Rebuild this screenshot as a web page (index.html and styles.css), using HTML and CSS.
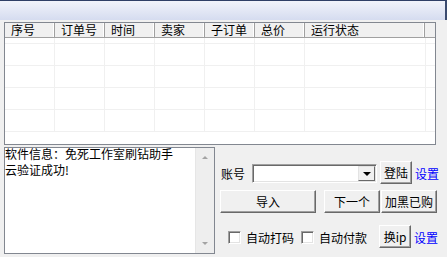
FILE: index.html
```html
<!DOCTYPE html>
<html lang="zh-CN">
<head>
    <meta charset="UTF-8">
    <title>刷钻助手</title>
    <link rel="stylesheet" href="styles.css">
</head>
<body>

    <div class="window">
        <div class="titlebar"></div>

        <div class="main">
            <div class="listview">
                <div class="list-head">
                    <div class="col">序号</div>
                    <div class="col">订单号</div>
                    <div class="col">时间</div>
                    <div class="col">卖家</div>
                    <div class="col">子订单</div>
                    <div class="col">总价</div>
                    <div class="col wide">运行状态</div>
                    <div class="col rest"></div>
                </div>
                <div class="list-body">
                    <div class="row"><span></span><span></span><span></span><span></span><span></span><span></span><span class="wide"></span></div>
                    <div class="row"><span></span><span></span><span></span><span></span><span></span><span></span><span class="wide"></span></div>
                    <div class="row"><span></span><span></span><span></span><span></span><span></span><span></span><span class="wide"></span></div>
                    <div class="row"><span></span><span></span><span></span><span></span><span></span><span></span><span class="wide"></span></div>
                    <div class="row"><span></span><span></span><span></span><span></span><span></span><span></span><span class="wide"></span></div>
                </div>
            </div>

            <div class="bottom">
                <div class="logbox">
                    <div class="log-text">
                        <div>软件信息：免死工作室刷钻助手</div>
                        <div>云验证成功!</div>
                    </div>
                    <div class="scrollbar">
                        <span class="arrow up"></span>
                        <span class="arrow down"></span>
                    </div>
                </div>

                <div class="panel">
                    <div class="line first">
                        <span class="label">账号</span>
                        <div class="combo">
                            <div class="combo-btn"><span class="tri"></span></div>
                        </div>
                        <button class="btn small">登陆</button>
                        <a class="link" href="#">设置</a>
                    </div>
                    <div class="line second">
                        <button class="btn import">导入</button>
                        <button class="btn mid">下一个</button>
                        <button class="btn mid tight">加黑已购</button>
                    </div>
                    <div class="line third">
                        <label class="check"><span class="box"></span>自动打码</label>
                        <label class="check"><span class="box"></span>自动付款</label>
                        <button class="btn small ip">换ip</button>
                        <a class="link" href="#">设置</a>
                    </div>
                </div>
            </div>
        </div>
    </div>

</body>
</html>
```

FILE: styles.css
```css
* {
    margin: 0;
    padding: 0;
    box-sizing: border-box;
}

body {
    font-family: "Noto Sans CJK SC", "DejaVu Sans", sans-serif;
    font-size: 12px;
    color: #000;
    background-color: #f0f0f0;
    width: 447px;
    height: 257px;
    overflow: hidden;
}

.window {
    height: 257px;
}

.titlebar {
    height: 20px;
    border-top: 1px solid #2f3f66;
    border-right: 2px solid #3b4b70;
    background: linear-gradient(#f1f3fa, #d5dcf0);
}

.main {
    padding: 2px 0 0 4px;
}

/* list view */
.listview {
    width: 432px;
    height: 123px;
    border: 1px solid #828790;
    background-color: #fff;
    overflow: hidden;
}

.list-head {
    display: flex;
    height: 15px;
    background-color: #f0f0f0;
    border-bottom: 1px solid #a0a0a0;
}

.col {
    width: 50px;
    padding-left: 6px;
    line-height: 14px;
    border-right: 1px solid #a0a0a0;
    box-shadow: inset -1px 0 #fff;
    white-space: nowrap;
}

.col.wide {
    width: 120px;
}

.col.rest {
    flex: 1;
    border-right: none;
    box-shadow: none;
}

.row {
    display: flex;
    height: 22px;
    border-bottom: 1px solid #f0f0f0;
}

.row:first-child {
    height: 6px;
}

.row span {
    width: 50px;
    border-right: 1px solid #f0f0f0;
}

.row span.wide {
    width: 121px;
}

/* bottom area */
.bottom {
    display: flex;
    margin-top: 2px;
}

.logbox {
    display: flex;
    flex: none;
    width: 211px;
    height: 107px;
    border: 1px solid #828790;
    background-color: #fff;
}

.log-text {
    flex: 1;
    line-height: 16px;
    margin-top: -2px;
    white-space: nowrap;
}

.scrollbar {
    position: relative;
    width: 19px;
    background-color: #eeeeee;
    border-left: 1px solid #e6e6e6;
}

.arrow {
    position: absolute;
    left: 6px;
    width: 0;
    height: 0;
    border-left: 3px solid transparent;
    border-right: 3px solid transparent;
}

.arrow.up {
    top: 8px;
    border-bottom: 3px solid #a3a3a3;
}

.arrow.down {
    bottom: 8px;
    border-top: 3px solid #a3a3a3;
}

.panel {
    flex: none;
    width: 228px;
    padding: 14px 0 0 6px;
}

.line {
    display: flex;
    align-items: center;
    height: 23px;
}

.line.second {
    margin-top: 6px;
}

.line.third {
    margin-top: 12px;
}

.label {
    width: 31px;
    padding-top: 2px;
}

.combo {
    position: relative;
    width: 125px;
    height: 19px;
    margin-top: 2px;
    background-color: #fff;
    border: 1px solid;
    border-color: #a0a0a0 #fff #fff #a0a0a0;
    box-shadow: inset 1px 1px #696969, inset -1px -1px #e3e3e3;
}

.combo-btn {
    position: absolute;
    right: 1px;
    top: 1px;
    width: 17px;
    height: 15px;
    background-color: #f0f0f0;
    border: 1px solid;
    border-color: #e3e3e3 #696969 #696969 #e3e3e3;
}

.tri {
    position: absolute;
    left: 4px;
    top: 5px;
    border-left: 4px solid transparent;
    border-right: 4px solid transparent;
    border-top: 4px solid #000;
}

.btn {
    font-family: inherit;
    font-size: 12px;
    height: 23px;
    background-color: #f0f0f0;
    border: 1px solid;
    border-color: #fff #696969 #696969 #fff;
    box-shadow: inset -1px -1px #a0a0a0;
    padding: 0;
}

.btn.small {
    width: 32px;
    margin-left: 3px;
}

.btn.import {
    width: 96px;
    margin-left: -1px;
}

.btn.mid {
    width: 56px;
    margin-left: 8px;
}

.btn.tight {
    margin-left: 1px;
}

.link {
    color: #0000ff;
    text-decoration: none;
    margin-left: 3px;
    padding-top: 2px;
}

.check {
    display: flex;
    align-items: center;
    margin-left: 7px;
    padding-top: 2px;
}

.check + .check {
    margin-left: 7px;
}

.check .box {
    width: 13px;
    height: 13px;
    margin-right: 5px;
    background-color: #fff;
    border: 1px solid;
    border-color: #a0a0a0 #fff #fff #a0a0a0;
    box-shadow: inset 1px 1px #696969, inset -1px -1px #e3e3e3;
}

.btn.ip {
    margin-left: 12px;
}
```
